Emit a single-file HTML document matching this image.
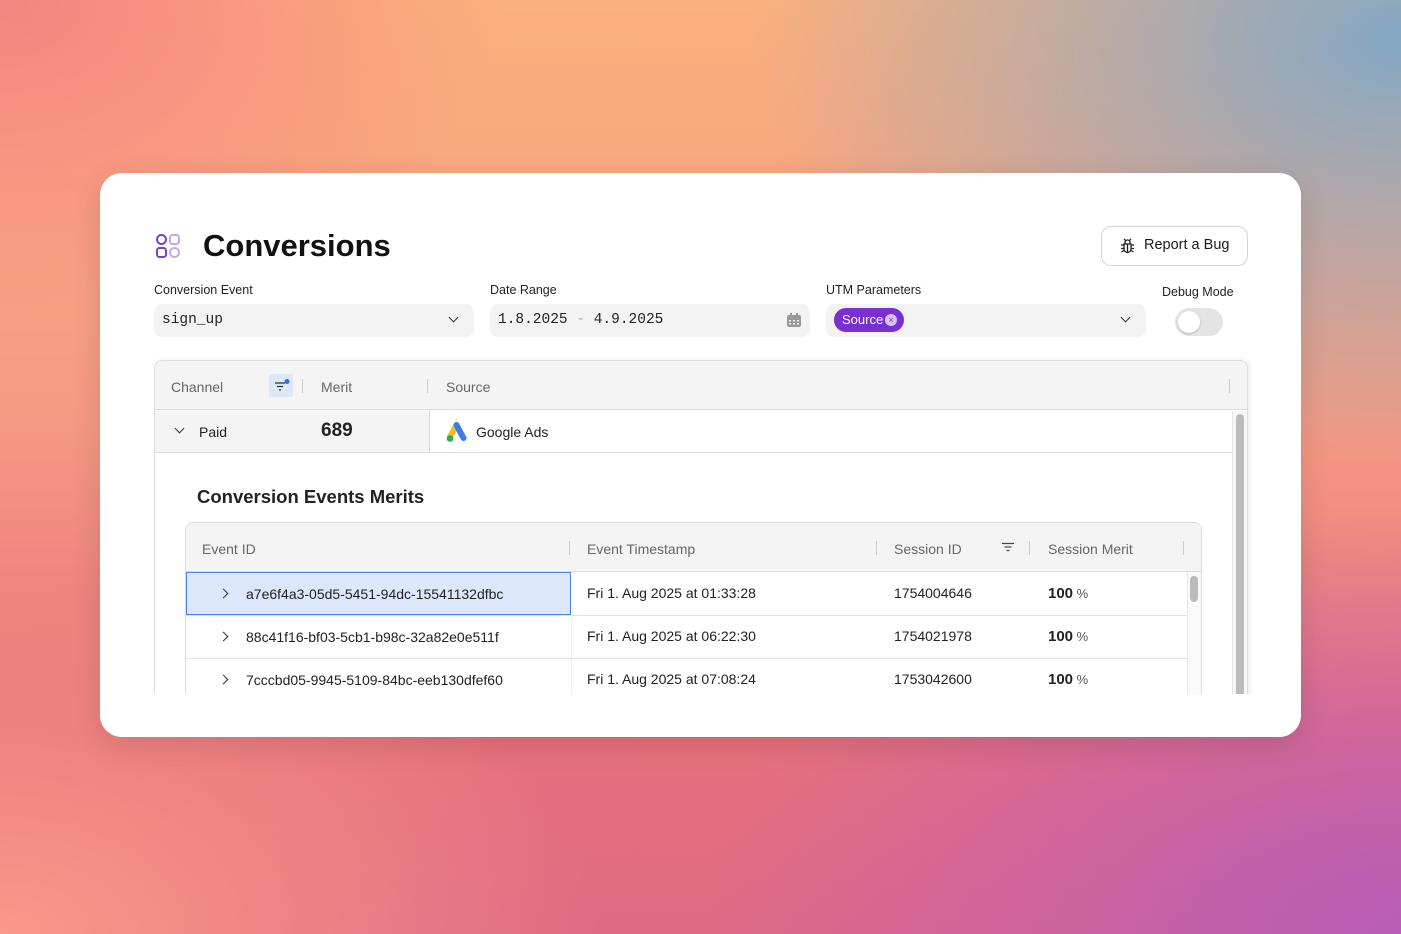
<!DOCTYPE html>
<html><head><meta charset="utf-8"><style>
*{box-sizing:border-box;margin:0;padding:0}
body{width:1401px;height:934px;overflow:hidden;font-family:"Liberation Sans",sans-serif;color:#1a1a1a;position:relative;
background:
radial-gradient(ellipse 650px 420px at 1401px 40px,#84a8c4 0%,rgba(132,168,196,0) 100%),
radial-gradient(ellipse 700px 420px at 1401px 934px,#b85cb8 0%,rgba(184,92,184,0) 100%),
radial-gradient(ellipse 600px 350px at 0px 934px,#f89a88 0%,rgba(248,154,136,0) 100%),
radial-gradient(ellipse 500px 320px at 0px 0px,#f48480 0%,rgba(244,132,128,0) 100%),
linear-gradient(180deg,#fcb07e 0%,#f49a82 45%,#e8707c 80%,#e06a84 100%);}
.card{position:absolute;left:100px;top:173px;width:1201px;height:564px;background:#fff;border-radius:22px;box-shadow:0 8px 30px rgba(0,0,0,.12);overflow:hidden}
.abs{position:absolute}
h1{position:absolute;left:103px;top:55px;font-size:31px;font-weight:700;color:#111}
.lbl{position:absolute;font-size:12.5px;color:#222}
.inp{position:absolute;top:131px;height:33px;background:#f3f3f3;border-radius:8px}
.mono{font-family:"Liberation Mono",monospace;font-size:14.5px;color:#222}
.chev{position:absolute;width:7px;height:7px;border-right:1.5px solid #333;border-bottom:1.5px solid #333;transform:rotate(45deg)}
.chr{position:absolute;width:7px;height:7px;border-right:1.5px solid #333;border-bottom:1.5px solid #333;transform:rotate(-45deg)}
.th{position:absolute;font-size:14px;color:#666}
.sep{position:absolute;width:1px;height:14px;background:#ccc}
.td{position:absolute;font-size:14px;color:#222}
.b{font-weight:700}
</style></head><body>
<div class="card">
 <svg class="abs" style="left:55px;top:60px" width="26" height="26" viewBox="0 0 26 26" fill="none" stroke-width="2">
  <circle cx="6.5" cy="6.5" r="4.5" stroke="#7b3fc4"/>
  <rect x="15" y="2" width="9" height="9" rx="2.5" stroke="#c4a8e8"/>
  <rect x="2" y="15" width="9" height="9" rx="2.5" stroke="#7b3fc4"/>
  <circle cx="19.5" cy="19.5" r="4.5" stroke="#c4a8e8"/>
 </svg>
 <h1>Conversions</h1>
 <div class="abs" style="left:1001px;top:53px;width:147px;height:40px;border:1.5px solid #d4d4d4;border-radius:10px;font-size:14.5px;padding:10px 0 0 42px">Report a Bug</div>
 <svg class="abs" style="left:1019px;top:64px" width="17" height="17" viewBox="0 0 17 17" fill="none" stroke="#222" stroke-width="1.3"><path d="M5 7h7v5a3.5 3.5 0 0 1-7 0z"/><path d="M6 7V5.5a2.5 2.5 0 0 1 5 0V7M8.5 7v8M2 8h3M12 8h3M2 11.5h3M12 11.5h3M2.5 15l2.5-1.5M14.5 15L12 13.5M5 2l1.5 1.5M12 2l-1.5 1.5"/></svg>

 <div class="lbl" style="left:54px;top:110px">Conversion Event</div>
 <div class="inp" style="left:54px;width:320px"><span class="abs mono" style="left:8px;top:8px">sign_up</span><div class="chev" style="left:296px;top:10px"></div></div>
 <div class="lbl" style="left:390px;top:110px">Date Range</div>
 <div class="inp" style="left:390px;width:320px"><span class="abs mono" style="left:8px;top:8px">1.8.2025 <span style="color:#aaa">-</span> 4.9.2025</span>
  <svg class="abs" style="left:296px;top:9px" width="16" height="15" viewBox="0 0 16 15"><rect x="1" y="2" width="14" height="12" rx="2" fill="#999"/><rect x="4" y="0" width="2" height="4" fill="#999"/><rect x="10" y="0" width="2" height="4" fill="#999"/><g fill="#f3f3f3"><rect x="3" y="7" width="2" height="1.5"/><rect x="7" y="7" width="2" height="1.5"/><rect x="11" y="7" width="2" height="1.5"/><rect x="3" y="10" width="2" height="1.5"/><rect x="7" y="10" width="2" height="1.5"/><rect x="11" y="10" width="2" height="1.5"/></g></svg></div>
 <div class="lbl" style="left:726px;top:110px">UTM Parameters</div>
 <div class="inp" style="left:726px;width:320px"><div class="abs" style="left:8px;top:4px;width:70px;height:24px;background:#7a2fd0;border-radius:12px;color:#fff;font-size:13px;padding:4px 0 0 8px">Source</div>
  <div class="abs" style="left:59px;top:10px;width:12px;height:12px;border-radius:6px;background:#d8c4f4;color:#7a2fd0;font-size:9px;text-align:center;line-height:12px">×</div>
  <div class="chev" style="left:296px;top:10px"></div></div>
 <div class="lbl" style="left:1062px;top:112px">Debug Mode</div>
 <div class="abs" style="left:1075px;top:135px;width:48px;height:28px;border-radius:14px;background:#e4e4e4"><div class="abs" style="left:3px;top:3px;width:22px;height:22px;border-radius:11px;background:#fff;box-shadow:0 1px 2px rgba(0,0,0,.2)"></div></div>

 <div class="abs" style="left:54px;top:187px;width:1094px;height:420px;border:1px solid #ddd;border-radius:8px;box-shadow:2px 0 6px rgba(0,0,0,.08);background:#fff;overflow:hidden">
  <div class="abs" style="left:0;top:0;width:1094px;height:49px;background:#f4f4f4;border-bottom:1px solid #ddd"></div>
  <div class="th" style="left:16px;top:18px">Channel</div>
  <div class="abs" style="left:114px;top:13px;width:24px;height:23px;background:#dce7f8;border-radius:2px"></div>
  <svg class="abs" style="left:119px;top:18px" width="18" height="14" viewBox="0 0 18 14" stroke="#333" stroke-width="1.3"><path d="M1 4h10M3 7.5h6M5 11h2"/><circle cx="13" cy="2.5" r="2.5" fill="#2a6ff0" stroke="none"/></svg>
  <div class="sep" style="left:147px;top:18px"></div>
  <div class="th" style="left:166px;top:18px">Merit</div>
  <div class="sep" style="left:272px;top:18px"></div>
  <div class="th" style="left:291px;top:18px">Source</div>
  <div class="sep" style="left:1074px;top:18px"></div>
  <div class="abs" style="left:0;top:50px;width:275px;height:41px;background:#f4f4f4;border-right:1px solid #ddd"></div>
  <div class="abs" style="left:0;top:91px;width:1078px;height:1px;background:#ddd"></div>
  <div class="chev" style="left:21px;top:64px"></div>
  <div class="td" style="left:44px;top:63px">Paid</div>
  <div class="td b" style="left:166px;top:59px;font-size:19px">689</div>
  <svg class="abs" style="left:290px;top:60px" width="24" height="22" viewBox="0 0 24 22"><path d="M11.5 4L5 16" stroke="#f7bb1a" stroke-width="6" stroke-linecap="round"/><path d="M11.5 4l7 13" stroke="#3b7de8" stroke-width="6" stroke-linecap="round"/><circle cx="5" cy="17.5" r="3.3" fill="#34a853"/></svg>
  <div class="td" style="left:321px;top:63px">Google Ads</div>
  <div class="abs" style="left:1077px;top:50px;width:16px;height:380px;background:#f6f6f6;border-left:1px solid #e6e6e6"></div>
  <div class="abs" style="left:1081px;top:53px;width:8px;height:380px;background:#bbb;border-radius:4px"></div>

  <div class="abs b" style="left:42px;top:125px;font-size:18.5px;color:#222">Conversion Events Merits</div>
  <div class="abs" style="left:30px;top:161px;width:1017px;height:300px;border:1px solid #ddd;border-radius:8px;overflow:hidden">
   <div class="abs" style="left:0;top:0;width:1017px;height:49px;background:#f4f4f4;border-bottom:1px solid #ddd"></div>
   <div class="th" style="left:16px;top:18px">Event ID</div>
   <div class="sep" style="left:383px;top:18px"></div>
   <div class="th" style="left:401px;top:18px">Event Timestamp</div>
   <div class="sep" style="left:690px;top:18px"></div>
   <div class="th" style="left:708px;top:18px">Session ID</div>
   <svg class="abs" style="left:815px;top:19px" width="14" height="11" viewBox="0 0 14 11" stroke="#444" stroke-width="1.3"><path d="M1 1.5h12M3.5 5h7M5.5 8.5h3"/></svg>
   <div class="sep" style="left:843px;top:18px"></div>
   <div class="th" style="left:862px;top:18px">Session Merit</div>
   <div class="sep" style="left:997px;top:18px"></div>
   <div class="abs" style="left:0;top:49px;width:385px;height:43px;background:#dce7fb;border:1.5px solid #4a84ea"></div>
   <div class="abs" style="left:0;top:92px;width:1001px;height:1px;background:#e2e2e2"></div>
   <div class="abs" style="left:0;top:135px;width:1001px;height:1px;background:#e2e2e2"></div>
   <div class="abs" style="left:385px;top:92px;width:1px;height:100px;background:#f0f0f0"></div>
   <div class="chr" style="left:34px;top:67px"></div>
   <div class="chr" style="left:34px;top:110px"></div>
   <div class="chr" style="left:34px;top:153px"></div>
   <div class="td" style="left:60px;top:63px">a7e6f4a3-05d5-5451-94dc-15541132dfbc</div>
   <div class="td" style="left:60px;top:106px">88c41f16-bf03-5cb1-b98c-32a82e0e511f</div>
   <div class="td" style="left:60px;top:149px">7cccbd05-9945-5109-84bc-eeb130dfef60</div>
   <div class="td" style="left:401px;top:62px">Fri 1. Aug 2025 at 01:33:28</div>
   <div class="td" style="left:401px;top:105px">Fri 1. Aug 2025 at 06:22:30</div>
   <div class="td" style="left:401px;top:148px">Fri 1. Aug 2025 at 07:08:24</div>
   <div class="td" style="left:708px;top:62px">1754004646</div>
   <div class="td" style="left:708px;top:105px">1754021978</div>
   <div class="td" style="left:708px;top:148px">1753042600</div>
   <div class="td" style="left:862px;top:62px"><span class="b" style="font-size:15px">100</span><span style="color:#555;font-size:13px"> %</span></div>
   <div class="td" style="left:862px;top:105px"><span class="b" style="font-size:15px">100</span><span style="color:#555;font-size:13px"> %</span></div>
   <div class="td" style="left:862px;top:148px"><span class="b" style="font-size:15px">100</span><span style="color:#555;font-size:13px"> %</span></div>
   <div class="abs" style="left:1001px;top:49px;width:16px;height:250px;background:#fafafa;border-left:1px solid #e8e8e8"></div>
   <div class="abs" style="left:1004px;top:53px;width:8px;height:26px;background:#bbb;border-radius:4px"></div>
  </div>
 </div>
 <div class="abs" style="left:0;top:521px;width:1201px;height:43px;background:#fff"></div>
</div>
</body></html>
